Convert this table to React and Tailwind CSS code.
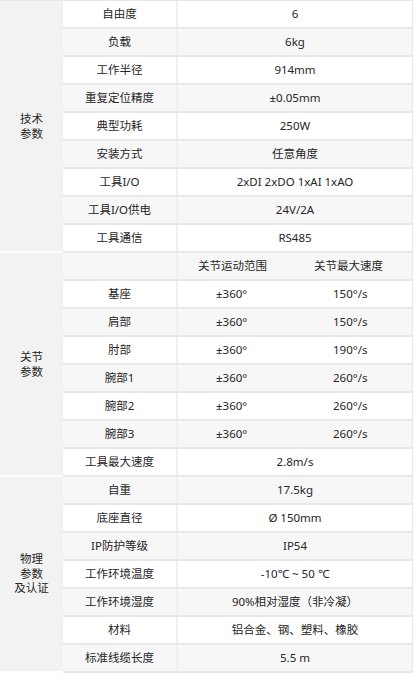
const tech = [
  ["自由度", "6"],
  ["负载", "6kg"],
  ["工作半径", "914mm"],
  ["重复定位精度", "±0.05mm"],
  ["典型功耗", "250W"],
  ["安装方式", "任意角度"],
  ["工具I/O", "2xDI 2xDO 1xAI 1xAO"],
  ["工具I/O供电", "24V/2A"],
  ["工具通信", "RS485"],
];

const joints = [
  ["基座", "±360°", "150°/s"],
  ["肩部", "±360°", "150°/s"],
  ["肘部", "±360°", "190°/s"],
  ["腕部1", "±360°", "260°/s"],
  ["腕部2", "±360°", "260°/s"],
  ["腕部3", "±360°", "260°/s"],
];

const physical = [
  ["自重", "17.5kg"],
  ["底座直径", "Ø 150mm"],
  ["IP防护等级", "IP54"],
  ["工作环境温度", "-10℃ ~ 50 ℃"],
  ["工作环境湿度", "90%相对湿度（非冷凝）"],
  ["材料", "铝合金、钢、塑料、橡胶"],
  ["标准线缆长度", "5.5 m"],
];

function Row({ idx, name, children }) {
  const bg = idx % 2 === 1 ? "bg-[#f7f7f7]" : "bg-white";
  return (
    <div className={`grid grid-cols-[113px_2px_1fr] h-[28px] border-b-2 border-[#e8e8e8] ${bg}`}>
      <div className="flex items-center justify-center">{name}</div>
      <div className="bg-[#efefef]" />
      {children}
    </div>
  );
}

function Section({ label, lead, children }) {
  return (
    <div className="flex">
      <div className={`w-[63px] shrink-0 bg-[#f2f2f2] border-b-2 border-white flex items-center justify-center text-center ${lead}`}>
        {label}
      </div>
      <div className="flex-1 flex flex-col">{children}</div>
    </div>
  );
}

export default function App() {
  return (
    <div className="w-[413px] h-[675px] overflow-hidden bg-white text-[11.5px] text-[#262626] font-['Noto_Sans','Noto_Sans_CJK_SC',sans-serif]">
      <div className="border-t border-r border-[#e8e8e8] w-[413px]">
        <Section label={<>技术<br />参数</>} lead="leading-[15px]">
          {tech.map(([n, v], i) => (
            <Row key={n} idx={i} name={n}>
              <div className="flex items-center justify-center">{v}</div>
            </Row>
          ))}
        </Section>
        <Section label={<>关节<br />参数</>} lead="leading-[15px]">
          <Row idx={9} name="">
            <div className="grid grid-cols-2 items-center">
              <span className="pl-[20px]">关节运动范围</span>
              <span className="pl-[19px]">关节最大速度</span>
            </div>
          </Row>
          {joints.map(([n, r, s], i) => (
            <Row key={n} idx={10 + i} name={n}>
              <div className="grid grid-cols-2 items-center">
                <span className="pl-[38px]">{r}</span>
                <span className="pl-[38px]">{s}</span>
              </div>
            </Row>
          ))}
          <Row idx={16} name="工具最大速度">
            <div className="flex items-center justify-center">2.8m/s</div>
          </Row>
        </Section>
        <Section label={<>物理<br />参数<br />及认证</>} lead="leading-[14.5px]">
          {physical.map(([n, v], i) => (
            <Row key={n} idx={17 + i} name={n}>
              <div className="flex items-center justify-center">{v}</div>
            </Row>
          ))}
        </Section>
      </div>
    </div>
  );
}
